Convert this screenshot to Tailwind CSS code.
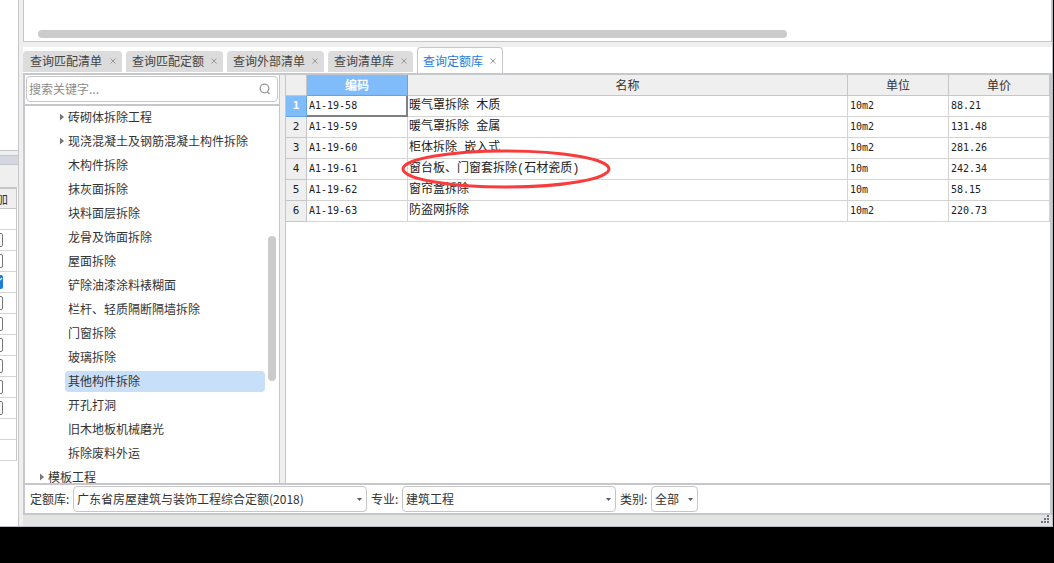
<!DOCTYPE html>
<html lang="zh-CN">
<head>
<meta charset="utf-8">
<title>查询定额库</title>
<script src="https://cdn.jsdelivr.net/npm/@tailwindcss/browser@4"></script>
</head>
<body class="flex h-screen flex-col overflow-hidden bg-black pr-px font-['Noto_Sans_CJK_SC',sans-serif] text-xs text-[#333]">
<div class="flex min-h-0 flex-1 border-r border-b border-[#b8bcc0] bg-[#efefef]">

  <!-- Left neighbouring panel -->
  <aside class="flex w-[19px] shrink-0 flex-col overflow-hidden border-r border-[#c6c6c6] bg-white">
    <div class="h-[151px] shrink-0 border-b border-[#c6c6c6]"></div>
    <div class="h-1 shrink-0 bg-[#efefef]"></div>
    <div class="h-[10px] shrink-0 border-y border-[#c6c6cc] bg-[#d3d6de]"></div>
    <div class="h-[22px] shrink-0 bg-[#efefef]"></div>
    <div class="flex w-[17px] flex-col border-r border-t-2 border-[#c6c6c6]">
      <div class="flex h-5 items-center justify-end overflow-hidden border-b border-[#c6c6c6] bg-[#efefef] pr-2"><span>加</span></div>
      <div class="h-[21px] border-b border-[#d4d4d4]"></div>
      <div class="flex h-[21px] items-center justify-end overflow-hidden border-b border-[#d4d4d4] pr-[13px]"><input type="checkbox" aria-label="加 2" class="size-[14px] shrink-0 appearance-none rounded-xs border border-[#777] bg-white"></div>
      <div class="flex h-[21px] items-center justify-end overflow-hidden border-b border-[#d4d4d4] pr-[13px]"><input type="checkbox" aria-label="加 3" class="size-[14px] shrink-0 appearance-none rounded-xs border border-[#777] bg-white"></div>
      <div class="flex h-[21px] items-center justify-end overflow-hidden border-b border-[#d4d4d4] pr-[13px]">
        <span class="grid size-[14px] shrink-0"><input type="checkbox" checked aria-label="加 4" class="col-start-1 row-start-1 size-[14px] appearance-none rounded-xs bg-[#1f7ae0]"><svg class="pointer-events-none col-start-1 row-start-1" viewBox="0 0 14 14" fill="none" stroke="#fff" stroke-width="1.2"><path d="M3 7l3 3 7-7"/></svg></span>
      </div>
      <div class="flex h-[21px] items-center justify-end overflow-hidden border-b border-[#d4d4d4] pr-[13px]"><input type="checkbox" aria-label="加 5" class="size-[14px] shrink-0 appearance-none rounded-xs border border-[#777] bg-white"></div>
      <div class="flex h-[21px] items-center justify-end overflow-hidden border-b border-[#d4d4d4] pr-[13px]"><input type="checkbox" aria-label="加 6" class="size-[14px] shrink-0 appearance-none rounded-xs border border-[#777] bg-white"></div>
      <div class="flex h-[21px] items-center justify-end overflow-hidden border-b border-[#d4d4d4] pr-[13px]"><input type="checkbox" aria-label="加 7" class="size-[14px] shrink-0 appearance-none rounded-xs border border-[#777] bg-white"></div>
      <div class="flex h-[21px] items-center justify-end overflow-hidden border-b border-[#d4d4d4] pr-[13px]"><input type="checkbox" aria-label="加 8" class="size-[14px] shrink-0 appearance-none rounded-xs border border-[#777] bg-white"></div>
      <div class="flex h-[21px] items-center justify-end overflow-hidden border-b border-[#d4d4d4] pr-[13px]"><input type="checkbox" aria-label="加 9" class="size-[14px] shrink-0 appearance-none rounded-xs border border-[#777] bg-white"></div>
      <div class="flex h-[21px] items-center justify-end overflow-hidden border-b border-[#d4d4d4] pr-[13px]"><input type="checkbox" aria-label="加 10" class="size-[14px] shrink-0 appearance-none rounded-xs border border-[#777] bg-white"></div>
      <div class="h-[21px] border-b border-[#d4d4d4]"></div>
      <div class="h-[21px] border-b border-[#d4d4d4]"></div>
    </div>
  </aside>

  <div class="ml-1 flex min-w-0 flex-1 flex-col">
    <!-- Bottom edge of the upper grid with its scrollbar -->
    <section class="flex h-[42px] shrink-0 flex-col justify-end border-x border-b border-[#c6c6c6] bg-white pr-[264px] pb-[3px] pl-[14px]">
      <div class="h-2 rounded-full bg-[#cbcbcb]"></div>
    </section>

    <!-- Tabs -->
    <nav class="mt-[5px] flex h-[26px] shrink-0 items-end gap-1 bg-white text-[#444]">
      <div class="mb-px flex h-[21px] items-center gap-2 rounded-t bg-[#dcdcdc] pr-1.5 pb-0.5 pl-[7px]"><button>查询匹配清单</button><button aria-label="关闭"><svg class="size-1.5" viewBox="0 0 6 6" fill="none" stroke="#999"><path d="M.5.5l5 5m0-5l-5 5"/></svg></button></div>
      <div class="mb-px flex h-[21px] items-center gap-[7px] rounded-t bg-[#dcdcdc] px-1.5 pb-0.5"><button>查询匹配定额</button><button aria-label="关闭"><svg class="size-1.5" viewBox="0 0 6 6" fill="none" stroke="#999"><path d="M.5.5l5 5m0-5l-5 5"/></svg></button></div>
      <div class="mb-px flex h-[21px] items-center gap-[7px] rounded-t bg-[#dcdcdc] px-1.5 pb-0.5"><button>查询外部清单</button><button aria-label="关闭"><svg class="size-1.5" viewBox="0 0 6 6" fill="none" stroke="#999"><path d="M.5.5l5 5m0-5l-5 5"/></svg></button></div>
      <div class="mb-px flex h-[21px] items-center gap-[7px] rounded-t bg-[#dcdcdc] px-1.5 pb-0.5"><button>查询清单库</button><button aria-label="关闭"><svg class="size-1.5" viewBox="0 0 6 6" fill="none" stroke="#999"><path d="M.5.5l5 5m0-5l-5 5"/></svg></button></div>
      <div class="flex h-[26px] items-center gap-[7px] rounded-t border border-b-0 border-[#c6c6cc] bg-white pr-1.5 pl-[5px] text-[#1f7ae0]"><button>查询定额库</button><button aria-label="关闭"><svg class="size-1.5" viewBox="0 0 6 6" fill="none" stroke="#999"><path d="M.5.5l5 5m0-5l-5 5"/></svg></button></div>
    </nav>

    <main class="flex min-h-0 flex-1 flex-col border-2 border-[#c6c8cc]">
      <div class="flex min-h-0 flex-1">
        <!-- Chapter tree -->
        <section class="flex w-[255px] shrink-0 flex-col border-r border-[#c6c6c6] bg-white">
          <label class="mx-px my-px flex h-[26px] shrink-0 items-center rounded border border-[#c6c6c6] pr-1.5 pl-0.5">
            <input type="text" placeholder="搜索关键字..." aria-label="搜索关键字" class="min-w-0 flex-1 outline-none placeholder:text-[#8c8c8c]">
            <svg class="size-3" viewBox="0 0 12 12" fill="none" stroke="#999" stroke-width="1.3"><circle cx="5.5" cy="5.5" r="4.3"/><path d="M8 8.500l2.500 2.500"/></svg>
          </label>
          <div class="mt-px h-0.5 shrink-0 bg-[#c6c6cc]"></div>
          <div class="flex min-h-0 flex-1 pr-[3px]">
            <ul class="flex min-w-0 flex-1 flex-col gap-[3px] overflow-hidden pt-px pr-[3px] [&>li]:flex [&>li]:h-[21px] [&>li]:shrink-0 [&>li]:items-center [&>li]:pb-0.5">
              <li class="pl-[35px]"><svg class="mr-1 h-2 w-1 shrink-0" viewBox="0 0 4 8" fill="#777"><path d="M0 0.500l4 3.500-4 3.500z"/></svg><button>砖砌体拆除工程</button></li>
              <li class="pl-[35px]"><svg class="mr-1 h-2 w-1 shrink-0" viewBox="0 0 4 8" fill="#777"><path d="M0 0.500l4 3.500-4 3.500z"/></svg><button>现浇混凝土及钢筋混凝土构件拆除</button></li>
              <li class="ml-10 pl-[3px]"><button>木构件拆除</button></li>
              <li class="ml-10 pl-[3px]"><button>抹灰面拆除</button></li>
              <li class="ml-10 pl-[3px]"><button>块料面层拆除</button></li>
              <li class="ml-10 pl-[3px]"><button>龙骨及饰面拆除</button></li>
              <li class="ml-10 pl-[3px]"><button>屋面拆除</button></li>
              <li class="ml-10 pl-[3px]"><button>铲除油漆涂料裱糊面</button></li>
              <li class="ml-10 pl-[3px]"><button>栏杆、轻质隔断隔墙拆除</button></li>
              <li class="ml-10 pl-[3px]"><button>门窗拆除</button></li>
              <li class="ml-10 pl-[3px]"><button>玻璃拆除</button></li>
              <li class="ml-10 rounded-sm bg-[#c8dffa] pl-[3px]"><button>其他构件拆除</button></li>
              <li class="ml-10 pl-[3px]"><button>开孔打洞</button></li>
              <li class="ml-10 pl-[3px]"><button>旧木地板机械磨光</button></li>
              <li class="ml-10 pl-[3px]"><button>拆除废料外运</button></li>
              <li class="pl-[15px]"><svg class="mr-1 h-2 w-1 shrink-0" viewBox="0 0 4 8" fill="#777"><path d="M0 0.500l4 3.500-4 3.500z"/></svg><button>模板工程</button></li>
            </ul>
            <div class="flex w-2 flex-col pt-[130px]"><div class="h-[145px] rounded-full bg-[#cbcbcb]"></div></div>
          </div>
        </section>

        <!-- Quota items -->
        <section class="ml-[5px] min-w-0 flex-1 border-l border-[#c6c6c6] bg-white">
          <table class="w-full table-fixed border-separate border-spacing-0 text-left">
            <colgroup><col class="w-[21px]"><col class="w-[101px]"><col><col class="w-[101px]"><col class="w-[101px]"></colgroup>
            <thead>
              <tr class="h-[21px] bg-[#efefef] text-center leading-4">
                <td class="border-r border-b border-[#c6c6c6] p-0"></td>
                <th class="border-r border-b border-[#62a4ec] bg-[#80bbfa] p-0 font-bold text-white">编码</th>
                <th class="border-r border-b border-[#c6c6c6] p-0 font-normal">名称</th>
                <th class="border-r border-b border-[#c6c6c6] p-0 font-normal">单位</th>
                <th class="border-r border-b border-[#c6c6c6] p-0 font-normal">单价</th>
              </tr>
            </thead>
            <tbody class="font-['DejaVu_Sans_Mono','Noto_Sans_CJK_SC',monospace] text-[10px] leading-4 text-[#222] [&_td]:border-r [&_td]:border-b [&_td]:border-[#d4d4d4] [&_td]:px-0.5 [&_td]:py-0 [&_td:nth-child(3)]:pl-px [&_th]:border-r [&_th]:border-b [&_th]:p-0 [&_th]:text-center [&_th]:text-[11px] [&_th]:leading-4">
              <tr class="h-[21px]"><th class="border-[#62a4ec] bg-[#80bbfa] font-bold text-white">1</th><td class="shadow-[inset_-1px_-1px_0_#808080] !border-[#808080]">A1-19-58</td><td class="font-['Liberation_Mono','Noto_Sans_CJK_SC',monospace] text-xs">暖气罩拆除 木质</td><td>10m2</td><td>88.21</td></tr>
              <tr class="h-[21px]"><th class="border-[#c6c6c6] bg-[#efefef] font-normal">2</th><td>A1-19-59</td><td class="font-['Liberation_Mono','Noto_Sans_CJK_SC',monospace] text-xs">暖气罩拆除 金属</td><td>10m2</td><td>131.48</td></tr>
              <tr class="h-[21px]"><th class="border-[#c6c6c6] bg-[#efefef] font-normal">3</th><td>A1-19-60</td><td class="font-['Liberation_Mono','Noto_Sans_CJK_SC',monospace] text-xs">柜体拆除 嵌入式</td><td>10m2</td><td>281.26</td></tr>
              <tr class="h-[21px]"><th class="border-[#c6c6c6] bg-[#efefef] font-normal">4</th><td>A1-19-61</td><td class="relative font-['Liberation_Mono','Noto_Sans_CJK_SC',monospace] text-xs">窗台板、门窗套拆除(石材瓷质)<svg class="pointer-events-none absolute -top-[10px] -left-[7px] z-10 h-10 w-[210px]" viewBox="0 0 210 40" fill="none" stroke="#f93b3b" stroke-width="3"><ellipse cx="105" cy="20" rx="103" ry="18"/></svg></td><td>10m</td><td>242.34</td></tr>
              <tr class="h-[21px]"><th class="border-[#c6c6c6] bg-[#efefef] font-normal">5</th><td>A1-19-62</td><td class="font-['Liberation_Mono','Noto_Sans_CJK_SC',monospace] text-xs">窗帘盒拆除</td><td>10m</td><td>58.15</td></tr>
              <tr class="h-[21px]"><th class="border-[#c6c6c6] bg-[#efefef] font-normal">6</th><td>A1-19-63</td><td class="font-['Liberation_Mono','Noto_Sans_CJK_SC',monospace] text-xs">防盗网拆除</td><td>10m2</td><td>220.73</td></tr>
            </tbody>
          </table>
        </section>
      </div>

      <!-- Filters -->
      <form class="flex h-[30px] shrink-0 items-center border-t-2 border-[#c6c6cc] bg-white pl-[5px]">
        <label for="lib" class="w-[43px]">定额库:</label>
        <span class="grid w-[294px] items-center">
          <select id="lib" class="col-start-1 row-start-1 h-[26px] appearance-none rounded border border-[#c6c6c6] bg-white px-[3px]"><option>广东省房屋建筑与装饰工程综合定额(2018)</option></select>
          <svg class="pointer-events-none col-start-1 row-start-1 mr-[5px] h-[3px] w-[5px] justify-self-end" viewBox="0 0 5 3" fill="#555a66"><path d="M0 0h5L2.500 3z"/></svg>
        </span>
        <label for="major" class="ml-1 w-[31px]">专业:</label>
        <span class="grid w-[214px] items-center">
          <select id="major" class="col-start-1 row-start-1 h-[26px] appearance-none rounded border border-[#c6c6c6] bg-white px-[3px]"><option>建筑工程</option></select>
          <svg class="pointer-events-none col-start-1 row-start-1 mr-[5px] h-[3px] w-[5px] justify-self-end" viewBox="0 0 5 3" fill="#555a66"><path d="M0 0h5L2.500 3z"/></svg>
        </span>
        <label for="kind" class="ml-1 w-[31px]">类别:</label>
        <span class="grid w-[47px] items-center">
          <select id="kind" class="col-start-1 row-start-1 h-[26px] appearance-none rounded border border-[#c6c6c6] bg-white px-[3px]"><option>全部</option></select>
          <svg class="pointer-events-none col-start-1 row-start-1 mr-[5px] h-[3px] w-[5px] justify-self-end" viewBox="0 0 5 3" fill="#555a66"><path d="M0 0h5L2.500 3z"/></svg>
        </span>
      </form>
    </main>

    <footer class="flex h-[11px] shrink-0 justify-end bg-[#e3e3e3] pr-[3px]">
      <svg class="size-2" viewBox="0 0 8 8" fill="#6f7480"><path d="M6 0h2v2H6zM3 3h2v2H3zM6 3h2v2H6zM0 6h2v2H0zM3 6h2v2H3zM6 6h2v2H6z"/></svg>
    </footer>
  </div>
</div>
<div class="h-9 shrink-0 bg-black"></div>
</body>
</html>
